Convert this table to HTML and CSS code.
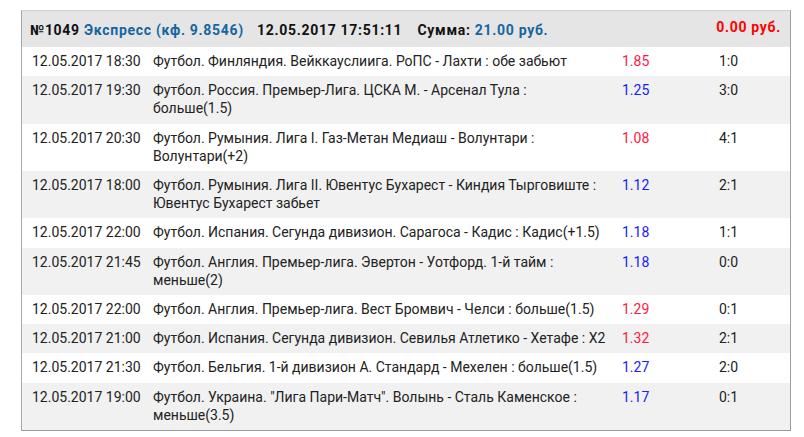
FILE: index.html
```html
<!DOCTYPE html>
<html lang="ru">
<head>
  <meta charset="UTF-8" />
  <title>Экспресс №1049</title>
  <link rel="stylesheet" href="styles.css">
</head>
<body>
  <div class="wrap">
    <div class="bet">
      <div class="bet-head">
        <span class="win">0.00 руб.</span>
        <span class="num">№1049</span>
        <span class="blue">Экспресс (кф. 9.8546)</span>
        <span class="date">12.05.2017 17:51:11</span>
        <span class="sum">Сумма: <span class="blue">21.00 руб.</span></span>
      </div>
      <table class="events">
        <colgroup>
          <col class="c-date">
          <col class="c-desc">
          <col class="c-odd">
          <col>
        </colgroup>
        <tr>
          <td>12.05.2017 18:30</td>
          <td class="desc">Футбол. Финляндия. Вейккауслиига. РоПС - Лахти : обе забьют</td>
          <td class="up">1.85</td>
          <td>1:0</td>
        </tr>
        <tr>
          <td>12.05.2017 19:30</td>
          <td class="desc">Футбол. Россия. Премьер-Лига. ЦСКА М. - Арсенал Тула :<br>больше(1.5)</td>
          <td class="down">1.25</td>
          <td>3:0</td>
        </tr>
        <tr>
          <td>12.05.2017 20:30</td>
          <td class="desc">Футбол. Румыния. Лига I. Газ-Метан Медиаш - Волунтари :<br>Волунтари(+2)</td>
          <td class="up">1.08</td>
          <td>4:1</td>
        </tr>
        <tr>
          <td>12.05.2017 18:00</td>
          <td class="desc">Футбол. Румыния. Лига II. Ювентус Бухарест - Киндия Тырговиште :<br>Ювентус Бухарест забьет</td>
          <td class="down">1.12</td>
          <td>2:1</td>
        </tr>
        <tr>
          <td>12.05.2017 22:00</td>
          <td class="desc">Футбол. Испания. Сегунда дивизион. Сарагоса - Кадис : Кадис(+1.5)</td>
          <td class="down">1.18</td>
          <td>1:1</td>
        </tr>
        <tr>
          <td>12.05.2017 21:45</td>
          <td class="desc">Футбол. Англия. Премьер-лига. Эвертон - Уотфорд. 1-й тайм :<br>меньше(2)</td>
          <td class="down">1.18</td>
          <td>0:0</td>
        </tr>
        <tr>
          <td>12.05.2017 22:00</td>
          <td class="desc">Футбол. Англия. Премьер-лига. Вест Бромвич - Челси : больше(1.5)</td>
          <td class="up">1.29</td>
          <td>0:1</td>
        </tr>
        <tr>
          <td>12.05.2017 21:00</td>
          <td class="desc">Футбол. Испания. Сегунда дивизион. Севилья Атлетико - Хетафе : Х2</td>
          <td class="up">1.32</td>
          <td>2:1</td>
        </tr>
        <tr>
          <td>12.05.2017 21:30</td>
          <td class="desc">Футбол. Бельгия. 1-й дивизион А. Стандард - Мехелен : больше(1.5)</td>
          <td class="down">1.27</td>
          <td>2:0</td>
        </tr>
        <tr>
          <td>12.05.2017 19:00</td>
          <td class="desc">Футбол. Украина. "Лига Пари-Матч". Волынь - Сталь Каменское :<br>меньше(3.5)</td>
          <td class="down">1.17</td>
          <td>0:1</td>
        </tr>
      </table>
    </div>
  </div>
</body>
</html>
```

FILE: styles.css
```css
body {
  margin: 0;
  background: #fff;
  font-family: Roboto, "Liberation Sans", sans-serif;
  font-size: 14px;
  color: #222;
}

.wrap {
  padding: 10px 13px 0 21px;
}

.bet {
  border: 1px solid #9d9d9d;
  border-top-color: #cfcfcf;
  border-left-color: #a8a8a8;
}

/* шапка купона */
.bet-head {
  background: #e5e5e5;
  padding: 10px 8px 8px 8px;
  line-height: 18px;
  font-weight: bold;
  letter-spacing: 0.7px;
  color: #111;
}
.bet-head .blue {
  color: #1565a0;
}
.bet-head .date {
  margin-left: 9px;
}
.bet-head .sum {
  margin-left: 11px;
}
.win {
  float: right;
  color: #ff0000;
  margin-top: -3px;
  margin-right: 1px;
}

/* события */
.events {
  width: 100%;
  border-collapse: collapse;
  table-layout: fixed;
}
.c-date { width: 121px; }
.c-desc { width: 469px; }
.c-odd { width: 97px; }

.events td {
  padding: 5px 10px 6px 10px;
  line-height: 18.2px;
  vertical-align: top;
  color: #222;
}
.events td:first-child {
  padding-right: 0;
}
.events td.desc {
  white-space: nowrap;
  padding-right: 0;
}
.events tr:nth-child(even) td {
  background: #f1f1f1;
}
.events td.up {
  color: #ff1744;
}
.events td.down {
  color: #1a1aff;
}
```
